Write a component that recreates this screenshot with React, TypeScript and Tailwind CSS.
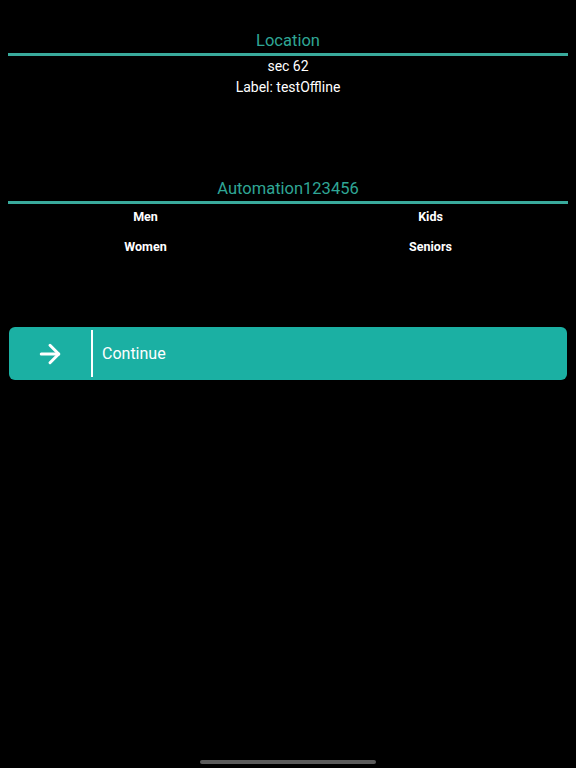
import { ArrowRight } from 'lucide-react';

const groups = [
  ['Men', 'Kids'],
  ['Women', 'Seniors'],
];

function SectionTitle({ title }: { title: string }) {
  return (
    <div className="flex flex-col">
      <p className="text-center text-[16.5px] leading-[20px] text-[#2fa695]">{title}</p>
      <div className="h-[3px] bg-[#39aa9c] mt-[2px]" />
    </div>
  );
}

export default function App() {
  return (
    <div
      className="relative w-[576px] h-[768px] bg-black overflow-hidden"
      style={{ fontFamily: 'Roboto, "Liberation Sans", sans-serif' }}
    >
      <div className="flex flex-col px-[8px] pt-[31px]">
        <SectionTitle title="Location" />
        <div className="flex flex-col items-center text-white text-[14px] leading-[21px]">
          <p>sec 62</p>
          <p>Label: testOffline</p>
        </div>

        <div className="mt-[81px]">
          <SectionTitle title="Automation123456" />
        </div>
        <div className="flex flex-col -mx-[5px] mt-[4px] gap-[13px]">
          {groups.map(row => (
            <div key={row[0]} className="grid grid-cols-2">
              {row.map(name => (
                <p key={name} className="text-center text-white text-[12.5px] leading-[17px] font-bold">
                  {name}
                </p>
              ))}
            </div>
          ))}
        </div>

        <button className="mt-[72px] ml-px flex items-center h-[53px] w-[558px] rounded-[6px] bg-[#1bb0a3] text-white">
          <span className="flex items-center justify-center w-[82px]">
            <ArrowRight className="w-[30px] h-[30px]" strokeWidth={2.4} />
          </span>
          <span className="w-[2px] h-[47px] bg-white" />
          <span className="ml-[9px] text-[16px]">Continue</span>
        </button>
      </div>

      <div className="absolute left-[200px] bottom-[4px] w-[176px] h-[4px] rounded-full bg-[#5b5b5b]" />
    </div>
  );
}
